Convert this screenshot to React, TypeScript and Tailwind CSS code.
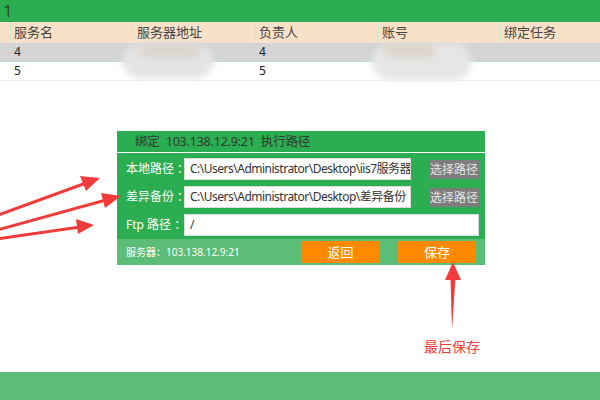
import React from 'react'

const font = { fontFamily: '"Noto Sans", "Noto Sans CJK SC", sans-serif' }

const cols = ['', '服务名', '服务器地址', '负责人', '账号', '绑定任务']

const rows = [
  { cells: ['', '4', '', '4', '', ''], bg: 'bg-[#d4d4d4]' },
  { cells: ['', '5', '', '5', '', ''], bg: 'bg-white' },
]

const grid = 'grid grid-cols-[10px_123px_122px_123px_122px_1fr]'

const Smudges = () => (
  <>
    <div className="absolute left-[122px] top-[44px] w-[92px] h-[34px] rounded-full bg-[#e4e4e4] blur-[3px]" />
    <div className="absolute left-[140px] top-[45px] w-[60px] h-[12px] rounded-full bg-[#d9d3cc] blur-[3px]" />
    <div className="absolute left-[372px] top-[44px] w-[100px] h-[36px] rounded-full bg-[#e6e6e6] blur-[3px]" />
    <div className="absolute left-[385px] top-[45px] w-[50px] h-[12px] rounded-full bg-[#ddd3c9] blur-[3px]" />
  </>
)

const Arrows = () => (
  <svg className="absolute inset-0 pointer-events-none" width="600" height="400">
    <g fill="#f23c3c" stroke="#f23c3c" strokeLinecap="round">
      <line x1="-10" y1="218" x2="86" y2="183" strokeWidth="3" />
      <polygon points="100,178 80,176 86,191" stroke="none" />
      <line x1="-10" y1="232" x2="106" y2="200" strokeWidth="3" />
      <polygon points="121,196 101,193 105,208" stroke="none" />
      <line x1="-10" y1="240" x2="80" y2="227" strokeWidth="3" />
      <polygon points="94,225 76,219 78,234" stroke="none" />
      <polygon points="452,330 450.5,278 455.5,278" stroke="none" />
      <polygon points="453,262 445,280 461,280" stroke="none" />
    </g>
  </svg>
)

const PathRow = ({ label, value, pick }: { label: string; value: string; pick: boolean }) => (
  <div className="flex items-center">
    <div className="w-[58px] shrink-0 text-[12px] text-white whitespace-nowrap">{label}</div>
    <div
      className={`${pick ? 'w-[227px]' : 'w-[295px]'} shrink-0 h-[22px] bg-white border border-[#dcdcdc] px-[5px] text-[12px] tracking-[-0.5px] text-[#333] leading-[20px] overflow-hidden whitespace-nowrap`}
    >
      {value}
    </div>
    {pick && (
      <div className="ml-[18px] w-[50px] shrink-0 h-[19px] bg-[#7d7d7d] text-[#e6e6e6] text-[12px] leading-[19px] text-center whitespace-nowrap">
        选择路径
      </div>
    )}
  </div>
)

export default function App() {
  return (
    <div className="relative w-[600px] h-[400px] overflow-hidden bg-white flex flex-col" style={font}>
      <div className="h-[22px] bg-[#2bad51] text-[#2a4a33] text-[17px] leading-[22px] pl-[3px]">1</div>

      <div className={`${grid} h-[21px] bg-[#f8e1c7]`}>
        {cols.map((c, i) => (
          <div key={i} className={`${i > 0 ? 'border-l border-[#cfe8d0]' : ''} text-[13px] text-[#444] leading-[21px] pl-[3px]`}>
            {c}
          </div>
        ))}
      </div>
      {rows.map((r, ri) => (
        <div key={ri} className={`${grid} h-[19px] ${r.bg} ${ri === 0 ? 'border-b border-[#b9e0c0]' : 'border-b border-[#eeeeee]'}`}>
          {r.cells.map((c, i) => (
            <div key={i} className="text-[12px] text-[#222] leading-[18px] pl-[4px]">
              {c}
            </div>
          ))}
        </div>
      ))}
      <Smudges />

      <div className="ml-[117px] mt-[50px] w-[368px]">
        <div className="h-[22px] bg-[#2bad51] border-b border-white text-[12.5px] tracking-[-0.2px] text-[#2f3b30] leading-[21px] pl-[18px] whitespace-nowrap">
          绑定&nbsp;&nbsp;103.138.12.9:21&nbsp;&nbsp;执行路径
        </div>
        <div className="bg-[#2bad51] pl-[9px] pt-[5px] pb-[3px] flex flex-col gap-[6px]">
          <PathRow label="本地路径 ：" value="C:\Users\Administrator\Desktop\iis7服务器管" pick />
          <PathRow label="差异备份 ：" value="C:\Users\Administrator\Desktop\差异备份" pick />
          <PathRow label="Ftp 路径 ：" value="/" pick={false} />
        </div>
        <div className="h-[26px] bg-[#5cbd76] flex items-center pl-[9px]">
          <div className="w-[175px] shrink-0 text-[10px] text-white whitespace-nowrap">服务器：103.138.12.9:21</div>
          <div className="w-[79px] h-[22px] bg-[#ff8a00] text-white text-[13px] leading-[22px] text-center">返回</div>
          <div className="ml-[18px] w-[78px] h-[22px] bg-[#ff8a00] text-white text-[13px] leading-[22px] text-center">保存</div>
        </div>
      </div>

      <div className="flex-1 relative">
        <div className="absolute left-[424px] top-[71px] text-[14px] text-[#f23c3c]">最后保存</div>
      </div>
      <div className="h-[28px] bg-[#5cbd78]" />

      <Arrows />
    </div>
  )
}
